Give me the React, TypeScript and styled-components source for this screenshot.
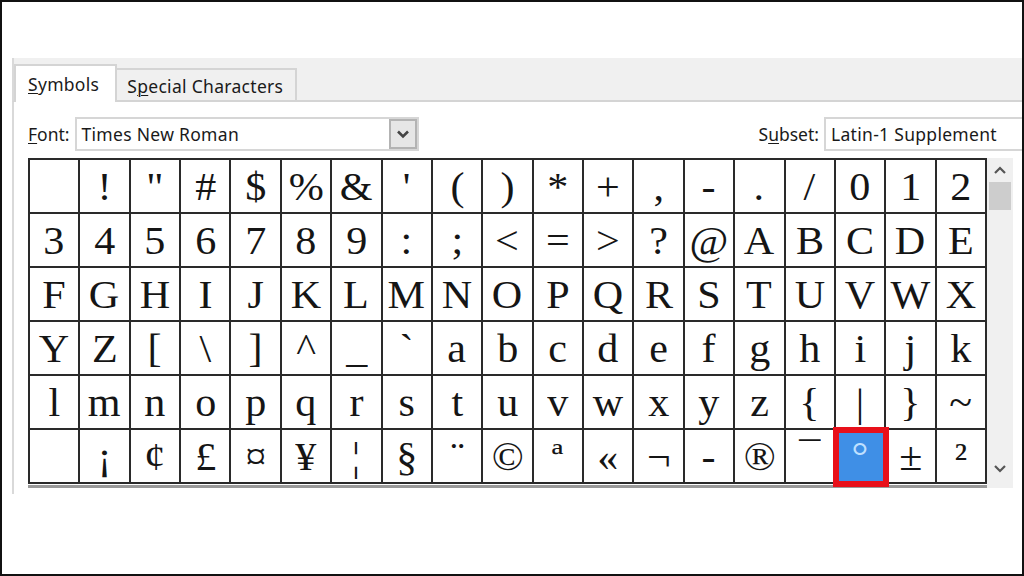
import React from "react";
import styled, { createGlobalStyle } from "styled-components";

const GlobalStyle = createGlobalStyle`
  html, body { margin: 0; padding: 0; background: #ffffff; }
  body { font-family: "Noto Sans", "Open Sans", sans-serif; }
`;

const Frame = styled.div`
  box-sizing: border-box;
  width: 1024px;
  height: 576px;
  border: 2px solid #111111;
  background: #ffffff;
  overflow: hidden;
  display: flex;
  flex-direction: column;
`;

const TopBlank = styled.div`
  height: 56px;
  flex-shrink: 0;
`;

const TabStrip = styled.div`
  margin-left: 10px;
  height: 42px;
  background: #f0f0f0;
  border-left: 2px solid #d9d9d9;
  border-bottom: 2px solid #d4d4d4;
  display: flex;
  align-items: flex-end;
  flex-shrink: 0;
`;

const Tab = styled.div<{ $active?: boolean }>`
  box-sizing: border-box;
  height: ${(p) => (p.$active ? "38px" : "32px")};
  margin-bottom: ${(p) => (p.$active ? "-2px" : "0")};
  padding: ${(p) => (p.$active ? "6px 16px 0 12px" : "4px 12px 0 10px")};
  background: ${(p) => (p.$active ? "#ffffff" : "#f0f0f0")};
  border: 2px solid #d4d4d4;
  border-bottom: none;
  font-size: 17.5px;
  color: #1a1a1a;
  letter-spacing: 0.3px;
  ${(p) => (p.$active ? "" : "border-left: none;")}
`;

const Key = styled.span`
  text-decoration: underline;
  text-underline-offset: 2px;
  text-decoration-thickness: 1px;
`;

const Panel = styled.div`
  margin-left: 10px;
  border-left: 2px solid #d9d9d9;
  padding-left: 14px;
  padding-top: 15px;
  height: 392px;
  box-sizing: border-box;
`;

const FieldRow = styled.div`
  display: flex;
  align-items: center;
  height: 34px;
`;

const Label = styled.span`
  font-size: 17.5px;
  color: #1a1a1a;
  margin-right: 5px;
  white-space: nowrap;
`;

const Combo = styled.div<{ $width: number; $overhang?: number }>`
  box-sizing: border-box;
  width: ${(p) => p.$width}px;
  margin-right: ${(p) => -(p.$overhang ?? 0)}px;
  flex-shrink: 0;
  height: 34px;
  border: 2px solid #d6d6d6;
  background: #ffffff;
  display: flex;
  align-items: center;
  justify-content: space-between;
  padding-left: 5px;
  font-size: 17.5px;
  letter-spacing: 0.3px;
  color: #1a1a1a;
`;

const DropButton = styled.div`
  box-sizing: border-box;
  width: 28px;
  height: 30px;
  background: #e6e6e6;
  border: 2px solid #b3b3b3;
  display: flex;
  align-items: center;
  justify-content: center;
`;

const Spacer = styled.div`
  flex: 1;
`;

const GridArea = styled.div`
  display: flex;
  margin-top: 7px;
`;

const GridWrap = styled.div`
  border-bottom: 3px solid #9a9a9a;
`;

const Grid = styled.div`
  box-sizing: border-box;
  width: 959px;
  display: grid;
  grid-template-columns: repeat(19, 1fr);
  grid-auto-rows: 54px;
  border-top: 2px solid #2a2a2a;
  border-left: 2px solid #2a2a2a;
`;

const Cell = styled.div<{ $selected?: boolean }>`
  box-sizing: border-box;
  border-right: 2px solid #2a2a2a;
  border-bottom: 2px solid #2a2a2a;
  display: flex;
  align-items: center;
  justify-content: center;
  font-family: "Liberation Serif", "Times New Roman", serif;
  font-size: 39px;
  line-height: 1;
  color: #151515;
  background: ${(p) => (p.$selected ? "#3f8fe6" : "#ffffff")};
  ${(p) =>
    p.$selected
      ? `outline: 6px solid #e8101a; outline-offset: -3px; position: relative; z-index: 1; color: #bfe0ff;`
      : ""}
`;

const Glyph = styled.span`
  display: block;
  transform: scaleX(1.08);
`;

const Scrollbar = styled.div`
  width: 26px;
  height: 330px;
  background: #f0f0f0;
  display: flex;
  flex-direction: column;
  align-items: center;
  padding-top: 8px;
  box-sizing: border-box;
`;

const Thumb = styled.div`
  width: 22px;
  height: 28px;
  background: #cdcdcd;
  margin-top: 6px;
`;

const ArrowSlot = styled.div`
  margin-bottom: 10px;
`;

const Arrow = ({ down }: { down?: boolean }) => (
  <svg width="14" height="10" viewBox="0 0 14 10">
    <path
      d={down ? "M2 3 L7 8 L12 3" : "M2 7 L7 2 L12 7"}
      fill="none"
      stroke="#555"
      strokeWidth="2.2"
    />
  </svg>
);

const rows: string[][] = [
  [" ", "!", '"', "#", "$", "%", "&", "'", "(", ")", "*", "+", ",", "-", ".", "/", "0", "1", "2"],
  ["3", "4", "5", "6", "7", "8", "9", ":", ";", "<", "=", ">", "?", "@", "A", "B", "C", "D", "E"],
  ["F", "G", "H", "I", "J", "K", "L", "M", "N", "O", "P", "Q", "R", "S", "T", "U", "V", "W", "X"],
  ["Y", "Z", "[", "\\", "]", "^", "_", "`", "a", "b", "c", "d", "e", "f", "g", "h", "i", "j", "k"],
  ["l", "m", "n", "o", "p", "q", "r", "s", "t", "u", "v", "w", "x", "y", "z", "{", "|", "}", "~"],
  ["\u00a0", "¡", "¢", "£", "¤", "¥", "¦", "§", "¨", "©", "ª", "«", "¬", "-", "®", "¯", "°", "±", "²"],
];

export default function App() {
  return (
    <>
      <GlobalStyle />
      <Frame>
        <TopBlank />
        <TabStrip>
          <Tab $active>
            <Key>S</Key>ymbols
          </Tab>
          <Tab>
            S<Key>p</Key>ecial Characters
          </Tab>
        </TabStrip>
        <Panel>
          <FieldRow>
            <Label>
              <Key>F</Key>ont:
            </Label>
            <Combo $width={344}>
              <span>Times New Roman</span>
              <DropButton>
                <svg width="14" height="10" viewBox="0 0 14 10">
                  <path d="M2 2.5 L7 7.5 L12 2.5" fill="none" stroke="#444" strokeWidth="2.6" />
                </svg>
              </DropButton>
            </Combo>
            <Spacer />
            <Label>
              S<Key>u</Key>bset:
            </Label>
            <Combo $width={222} $overhang={24}>
              <span>Latin-1 Supplement</span>
            </Combo>
          </FieldRow>
          <GridArea>
            <GridWrap>
              <Grid>
                {rows.map((row, r) =>
                  row.map((ch, c) => (
                    <Cell key={`${r}-${c}`} $selected={r === 5 && c === 16}>
                      <Glyph>{ch}</Glyph>
                    </Cell>
                  ))
                )}
              </Grid>
            </GridWrap>
            <Scrollbar>
              <Arrow />
              <Thumb />
              <Spacer />
              <ArrowSlot>
                <Arrow down />
              </ArrowSlot>
            </Scrollbar>
          </GridArea>
        </Panel>
      </Frame>
    </>
  );
}
